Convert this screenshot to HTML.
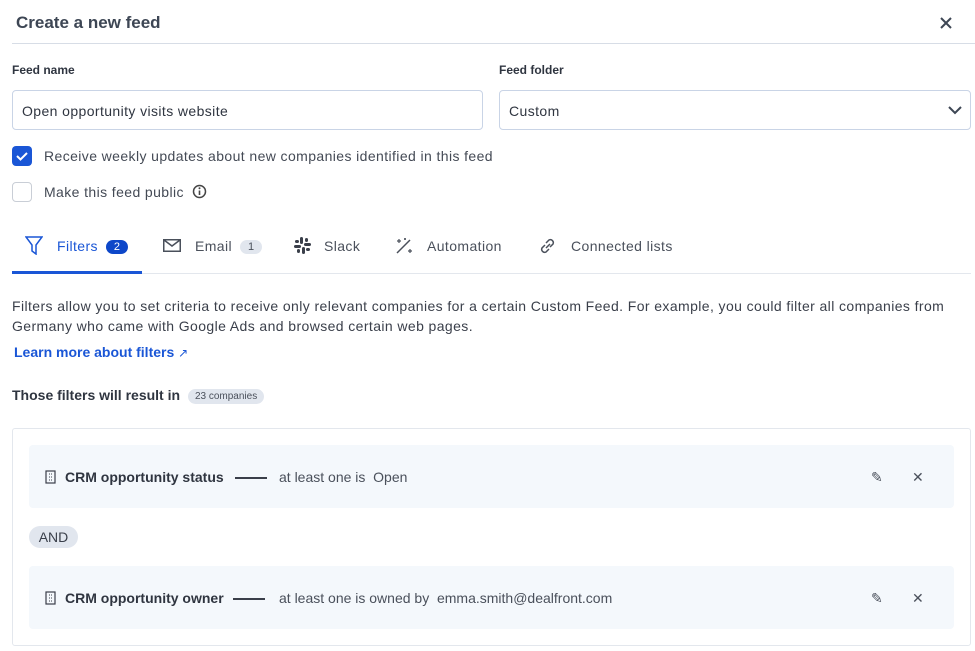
<!DOCTYPE html>
<html><head><meta charset="utf-8"><style>
*{box-sizing:border-box;margin:0;padding:0}
body{width:975px;height:651px;overflow:hidden;background:#fff;font-family:"Liberation Sans",sans-serif;color:#3a3f4a;position:relative;letter-spacing:0.4px}
.a{position:absolute}
.title{left:16px;top:13px;font-size:17px;font-weight:bold;color:#3d4654;letter-spacing:0}
.hr{left:12px;right:0;top:43px;height:1px;background:#d7dde6}
.lbl{font-size:12px;font-weight:bold;color:#2f3540;top:63px;letter-spacing:0}
.inp{top:90px;height:40px;border:1px solid #c9d4e6;border-radius:4px;font-size:14px;padding:12px 9px;color:#2f3540}
.cb{width:20px;height:20px;border-radius:4px;left:12px}
.ct{left:44px;font-size:14px;color:#444a55}
.tab{top:238px;font-size:14px;color:#4a505b}
.badge{display:inline-block;border-radius:9px;font-size:11px;padding:1px 8px;margin-left:8px;vertical-align:1px;letter-spacing:0}
.row{left:29px;width:925px;height:63px;background:#f4f8fc;border-radius:4px}
.row .t{position:absolute;left:36px;top:24px;font-size:14px;font-weight:bold;color:#2f3540;letter-spacing:0}
.row .d{position:absolute;top:24px;font-size:14px;color:#4a505b;letter-spacing:0}
.bi{position:absolute;left:16px;top:25px}
</style></head><body>
<div class="a title">Create a new feed</div>
<svg class="a" style="left:940px;top:17px" width="12" height="12"><path d="M1 1l10 10M11 1L1 11" stroke="#3d4654" stroke-width="2"/></svg>
<div class="a hr"></div>
<div class="a lbl" style="left:12px">Feed name</div>
<div class="a lbl" style="left:499px">Feed folder</div>
<div class="a inp" style="left:12px;width:471px">Open opportunity visits website</div>
<div class="a inp" style="left:499px;width:472px">Custom
<svg style="position:absolute;right:8px;top:14px" width="14" height="10" viewBox="0 0 14 10"><path d="M1 2l6 6 6-6" fill="none" stroke="#3d4654" stroke-width="2"/></svg></div>
<div class="a cb" style="top:146px;background:#1a56d6"><svg width="20" height="20"><path d="M5 10l3.5 3.5L15 7" fill="none" stroke="#fff" stroke-width="2"/></svg></div>
<div class="a ct" style="top:148px">Receive weekly updates about new companies identified in this feed</div>
<div class="a cb" style="top:182px;border:1px solid #c9ced6"></div>
<div class="a ct" style="top:184px">Make this feed public</div>
<svg class="a" style="left:192px;top:184px" width="15" height="15"><circle cx="7.5" cy="7.5" r="6" fill="none" stroke="#444" stroke-width="1.5"/><path d="M7.5 6.5v4.5" stroke="#444" stroke-width="1.6"/><circle cx="7.5" cy="4.3" r="1" fill="#444"/></svg>

<svg class="a" style="left:25px;top:236px" width="18" height="19" viewBox="0 0 18 19"><path d="M1 1h16l-6 8v9l-4-3V9z" fill="none" stroke="#1a56d6" stroke-width="1.5"/></svg>
<div class="a tab" style="left:57px;color:#1a56d6">Filters<span class="badge" style="background:#0d47c9;color:#fff">2</span></div>
<svg class="a" style="left:163px;top:239px" width="18" height="13"><rect x=".75" y=".75" width="16.5" height="11.5" fill="none" stroke="#4a505b" stroke-width="1.5"/><path d="M1 1l8 6 8-6" fill="none" stroke="#4a505b" stroke-width="1.5"/></svg>
<div class="a tab" style="left:195px">Email<span class="badge" style="background:#e1e6ee;color:#4a505b">1</span></div>
<svg class="a" style="left:294px;top:237px" width="17" height="17" viewBox="0 0 17 17" fill="#3a3f4a"><rect x="6" y="0" width="3" height="7" rx="1.5"/><rect x="8" y="10" width="3" height="7" rx="1.5"/><rect x="0" y="8" width="7" height="3" rx="1.5"/><rect x="10" y="6" width="7" height="3" rx="1.5"/><rect x="1" y="3" width="4" height="3" rx="1.5"/><rect x="12" y="11" width="4" height="3" rx="1.5"/><rect x="11" y="1" width="3" height="4" rx="1.5"/><rect x="3" y="12" width="3" height="4" rx="1.5"/></svg>
<div class="a tab" style="left:324px">Slack</div>
<svg class="a" style="left:395px;top:237px" width="20" height="18"><path d="M2 16L15 3" stroke="#4a505b" stroke-width="1.5"/><path d="M4 2v4M2 4h4M15 12v4M13 14h4M10 1v2M9 2h2" stroke="#4a505b" stroke-width="1.2"/></svg>
<div class="a tab" style="left:427px">Automation</div>
<svg class="a" style="left:538px;top:237px" width="19" height="18"><path d="M8 11l4-4M7 8L4 11a3 3 0 004 4l3-3M12 10l3-3a3 3 0 00-4-4L8 6" fill="none" stroke="#4a505b" stroke-width="1.5"/></svg>
<div class="a tab" style="left:571px">Connected lists</div>
<div class="a" style="left:12px;right:4px;top:273px;height:1px;background:#e3e7ed"></div>
<div class="a" style="left:12px;width:130px;top:271px;height:3px;background:#1a56d6"></div>

<div class="a" style="left:12px;top:296px;width:950px;font-size:14px;line-height:20px;color:#3a3f4a">Filters allow you to set criteria to receive only relevant companies for a certain Custom Feed. For example, you could filter all companies from Germany who came with Google Ads and browsed certain web pages.</div>
<div class="a" style="left:14px;top:344px;font-size:14px;font-weight:bold;color:#1a56d6;letter-spacing:0">Learn more about filters <span style="font-weight:normal;font-size:12px">↗</span></div>
<div class="a" style="left:12px;top:387px;font-size:14px;font-weight:bold;color:#2f3540;letter-spacing:0">Those filters will result in <span style="display:inline-block;background:#e1e6ee;border-radius:8px;font-size:10px;font-weight:normal;padding:2px 7px;margin-left:4px;color:#4a505b;vertical-align:1px">23 companies</span></div>

<div class="a" style="left:12px;top:428px;width:959px;height:218px;border:1px solid #e3e7ed;border-radius:3px"></div>
<div class="a row" style="top:445px"><svg class="bi" width="11" height="14"><rect x="1" y="1" width="9" height="12" fill="none" stroke="#3a3f4a" stroke-width="1.2"/><path d="M4 4h1M6 4h1M4 7h1M6 7h1M4 10h1M6 10h1" stroke="#3a3f4a"/></svg><span class="t">CRM opportunity status</span><span style="position:absolute;left:206px;top:32px;width:32px;height:2px;background:#3a3f4a"></span><span class="d" style="left:250px">at least one is&nbsp; Open</span><span class="d" style="left:842px">✎</span><span class="d" style="left:883px">✕</span></div>
<div class="a" style="left:29px;top:526px;width:49px;height:22px;border-radius:11px;background:#e1e6ee;font-size:14px;text-align:center;line-height:22px;color:#3a3f4a;letter-spacing:0">AND</div>
<div class="a row" style="top:566px"><svg class="bi" width="11" height="14"><rect x="1" y="1" width="9" height="12" fill="none" stroke="#3a3f4a" stroke-width="1.2"/><path d="M4 4h1M6 4h1M4 7h1M6 7h1M4 10h1M6 10h1" stroke="#3a3f4a"/></svg><span class="t">CRM opportunity owner</span><span style="position:absolute;left:204px;top:32px;width:32px;height:2px;background:#3a3f4a"></span><span class="d" style="left:250px">at least one is owned by&nbsp; emma.smith@dealfront.com</span><span class="d" style="left:842px">✎</span><span class="d" style="left:883px">✕</span></div>
</body></html>
